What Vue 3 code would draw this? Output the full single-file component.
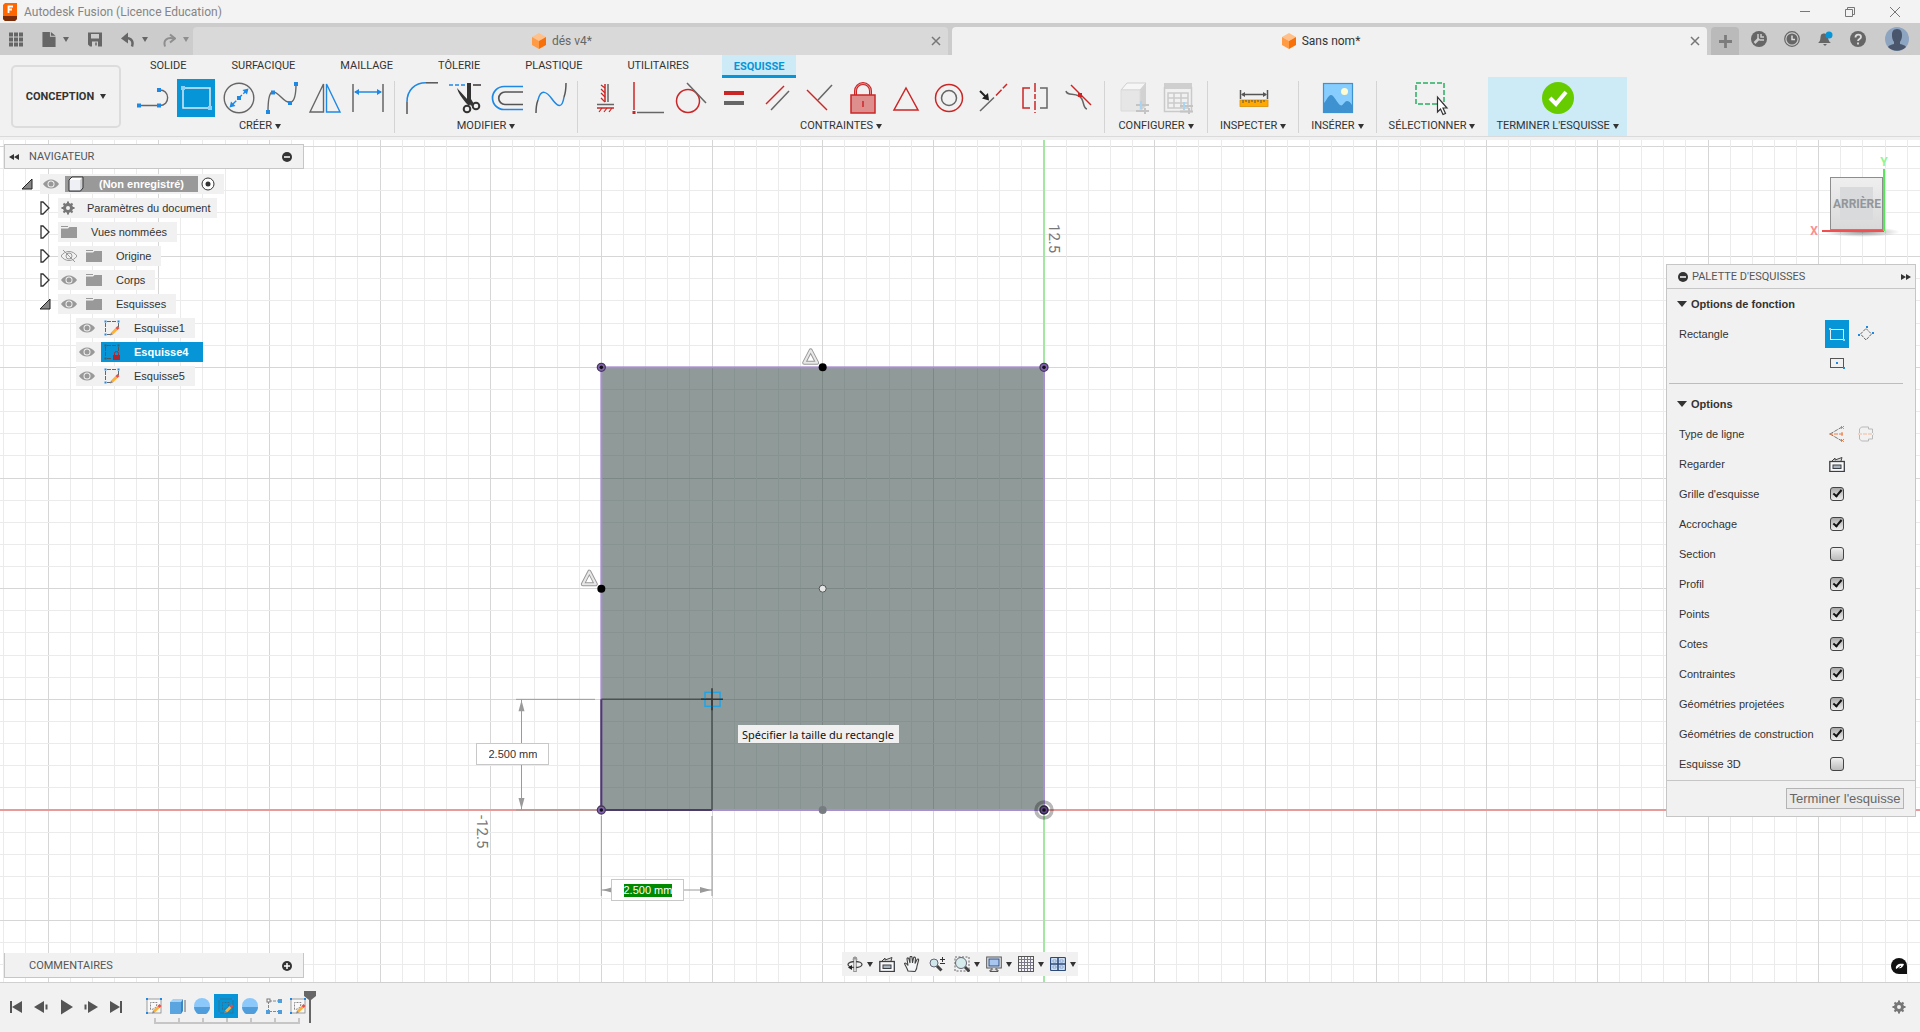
<script setup>
import { ref } from 'vue'

const BLUE = '#1e88e5'
const GREY = '#666'
const RED = '#cb2626'

const square = (x, y, c = BLUE, s = 4) =>
  `<rect x="${x - s / 2}" y="${y - s / 2}" width="${s}" height="${s}" fill="${c}"/>`

const pencil =
  '<path d="M7 12.5L11.5 8l2 2L9 14.5z" fill="#fdb035"/><path d="M11.5 8L13.5 6l2 2-2 2z" fill="#f04a43"/><path d="M7 12.5L9 14.5 6 15.5z" fill="#888"/>'

const icons = {
  line: `<path d="M2 23.5H22M22 8C33 7 34 24 22 23.5" stroke="${GREY}" stroke-width="1.4" fill="none"/>${square(2, 23.5)}${square(22, 23.5)}${square(22, 8)}`,
  rectangle: `<rect x="3" y="6" width="27" height="20" fill="none" stroke="#dceaf2" stroke-width="1.5"/>${square(3, 6, '#8fd0f5')}${square(30, 26, '#8fd0f5')}`,
  circle: `<circle cx="16" cy="16" r="14.8" fill="none" stroke="${GREY}" stroke-width="1.4"/><path d="M9 23L23 9" stroke="${BLUE}" stroke-width="1.4" stroke-dasharray="6 2"/><path d="M6.5 25.5l1.5-6 4.5 4.5zM25.5 6.5l-1.5 6-4.5-4.5z" fill="${BLUE}"/>${square(16, 16)}`,
  spline: `<path d="M2 30C2 4 8 8 15 15S30 26 30 2" fill="none" stroke="${GREY}" stroke-width="1.4"/>${square(2, 30)}${square(7, 10.5)}${square(24, 21)}${square(30, 2)}`,
  mirror: `<path d="M14.5 2V30H1z" fill="none" stroke="${GREY}" stroke-width="1.4"/><path d="M17.5 2V30H31z" fill="none" stroke="${BLUE}" stroke-width="1.4"/>`,
  dimension: `<path d="M1 2V30M31 2V30" stroke="${GREY}" stroke-width="1.5"/><path d="M3 10H29" stroke="${BLUE}" stroke-width="1.5"/><path d="M2 10l5-3v6zM30 10l-5-3v6z" fill="${BLUE}"/>`,
  fillet: `<path d="M1 32V20" stroke="#555" stroke-width="1.5"/><path d="M1 20C1 8 9 .8 20 .8" fill="none" stroke="${BLUE}" stroke-width="1.5"/><path d="M20 .8H32" stroke="#555" stroke-width="1.5"/>`,
  trim: `<path d="M0 3H18" stroke="${BLUE}" stroke-width="1.6" stroke-dasharray="4 2"/><path d="M24 3H32" stroke="#444" stroke-width="1.6"/><path d="M18 1h4v16l3 5-3 2-4-7zM8 6l11 12 3 3-2 3-3-3C13 16 9 11 8 6z" fill="#333"/><circle cx="18" cy="27" r="3.3" fill="none" stroke="#333" stroke-width="2"/><circle cx="27" cy="24" r="3.3" fill="none" stroke="#333" stroke-width="2"/>`,
  offset: `<path d="M31 4.5H12a11.5 11.5 0 0 0 0 23H31" fill="none" stroke="${BLUE}" stroke-width="1.7"/><path d="M31 10H13a6 6 0 0 0 0 12.5H31" fill="none" stroke="#555" stroke-width="1.7"/>`,
  curve: `<path d="M1 31C1 28 1 23 3 18" fill="none" stroke="#555" stroke-width="1.5"/><path d="M3 18C6 6 12 10 17 17S27 28 29 15" fill="none" stroke="${BLUE}" stroke-width="1.5"/><path d="M29 15C30.5 11 31 6 31 1" fill="none" stroke="#555" stroke-width="1.5"/>`,
  ground: `<path d="M16 2V20M8 26H25" stroke="${RED}" stroke-width="1.5"/><path d="M19 2V20M8 22.5H25" stroke="${GREY}" stroke-width="1.5"/><path d="M16 6l-4-3M16 11l-4-4M16 15l-4-4M16 20l-4-4M13 26l-3 4M18 26l-3 4M23 26l-3 4" stroke="${RED}" stroke-width="1.2"/>`,
  coincident: `<path d="M2 0V28" stroke="${RED}" stroke-width="1.5"/><path d="M5 30.5H32" stroke="${GREY}" stroke-width="1.5"/>${square(2, 30.5, RED, 3)}`,
  tangent: `<circle cx="13" cy="19" r="11.5" fill="none" stroke="${RED}" stroke-width="1.5"/><path d="M12 1L31 21" stroke="${GREY}" stroke-width="1.5"/>`,
  equal: `<path d="M6 11H26" stroke="${RED}" stroke-width="4"/><path d="M6 21H26" stroke="${GREY}" stroke-width="4"/>`,
  parallel: `<path d="M5 22L23 4" stroke="${RED}" stroke-width="1.5"/><path d="M10 28L28 9" stroke="${GREY}" stroke-width="1.5"/>`,
  perpendicular: `<path d="M3 8L23 28" stroke="${RED}" stroke-width="1.5"/><path d="M14 18L28 3" stroke="${GREY}" stroke-width="1.5"/>`,
  lock: `<path d="M8.5 14V9a7.5 7.5 0 0 1 15 0V14" fill="none" stroke="${RED}" stroke-width="3"/><path d="M8.5 14V9a7.5 7.5 0 0 1 15 0V14" fill="none" stroke="#e58d8d" stroke-width="1"/><rect x="4" y="13" width="24" height="18" fill="#df8e8e" stroke="${RED}" stroke-width="1.5"/><path d="M16 19v6" stroke="${RED}" stroke-width="1.5"/>`,
  triangle: `<path d="M16 6L28 28H4z" fill="none" stroke="${RED}" stroke-width="1.5"/>`,
  concentric: `<circle cx="16" cy="16" r="13.5" fill="none" stroke="${RED}" stroke-width="1.5"/><circle cx="16" cy="16" r="7.5" fill="none" stroke="${GREY}" stroke-width="1.5"/>`,
  collinear: `<path d="M4 29L18 15.5" stroke="${GREY}" stroke-width="1.5"/><path d="M20 13.5L31 2" stroke="${RED}" stroke-width="1.5" stroke-dasharray="8 2"/><path d="M4 9l6 6" stroke="#222" stroke-width="2"/><path d="M13 18.5l-1-7.5-6 5.5z" fill="#222"/>`,
  symmetry: `<path d="M11 6H4V26H11" fill="none" stroke="${RED}" stroke-width="1.5"/><path d="M21 6H28V26H21" fill="none" stroke="${GREY}" stroke-width="1.5"/><path d="M16 1V31" stroke="${RED}" stroke-width="1.5" stroke-dasharray="9 2 5 2"/>`,
  curvature: `<path d="M4 9c1 5 7 2 13 5s3 12 8 13" fill="none" stroke="${GREY}" stroke-width="1.5"/><path d="M9 3L29 23" stroke="${RED}" stroke-width="1.5"/>${square(18, 13, RED)}`,
  configBox: `<path d="M2 8L8 1H27L21 8z" fill="#f6f6f6" stroke="#cfcfcf"/><path d="M21 8L27 1V24L21 30z" fill="#d2d2d2"/><path d="M2 8H21V29H2z" fill="#e6e6e6" stroke="#dadada"/><path d="M17 23H30M17 29H30" stroke="#c4c4c4" stroke-width="2"/><path d="M22 19v8" stroke="#a9d4f2" stroke-width="2"/><path d="M26 26v6" stroke="#c4c4c4" stroke-width="2"/>`,
  configTable: `<rect x="2" y="1" width="28" height="6" fill="#cfcfcf"/><path d="M2.5 5V29.5H29.5V5M6 11H26V26H6zM12 11V26M19 11V26M6 16H26M6 21H26" fill="none" stroke="#cacaca" stroke-width="1.5"/><path d="M18 24H31M18 29.5H31" stroke="#c4c4c4" stroke-width="2"/><path d="M22 20v8" stroke="#a9d4f2" stroke-width="2"/><path d="M27 26v6" stroke="#c4c4c4" stroke-width="2"/>`,
  measure: `<path d="M2.5 8V17M29.5 8V17M4 12.5H28" stroke="#555" stroke-width="1.5"/><path d="M3 12.5l4-2.500v5zM29 12.5l-4-2.500v5z" fill="#555"/><rect x="2" y="18" width="28" height="6.5" fill="#ffa800" stroke="#d98e00" stroke-width=".8"/><path d="M5 18v3M8 18v2M11 18v3M14 18v2M17 18v3M20 18v2M23 18v3M26 18v2" stroke="#555"/>`,
  image: `<rect x="1.5" y="1.5" width="29" height="29" fill="#87ceff" stroke="#3d92cf" stroke-width="1.2"/><path d="M1 22c3-2 5-9 8-9s6 8 9 10 4-4 7-4 4 3 6 5V31H1z" fill="#3d92cf"/><circle cx="22.5" cy="9.5" r="3.5" fill="#fffbd0"/>`,
  select: `<rect x="-1" y="1" width="28" height="21" fill="none" stroke="#27ae60" stroke-width="1.5" stroke-dasharray="5 2"/><path d="M20.5 15V30L23.5 27 26 32.5 28.500 31.5 26 26H30z" fill="#fff" stroke="#333" stroke-width="1.2"/>`,
  finish: `<circle cx="16" cy="16" r="16" fill="#6c0"/><path d="M8 16l6 6L24 10" fill="none" stroke="#fff" stroke-width="4"/>`
}

const ribbonTabs = ['SOLIDE', 'SURFACIQUE', 'MAILLAGE', 'TÔLERIE', 'PLASTIQUE', 'UTILITAIRES', 'ESQUISSE']
const groups = [
  { label: 'CRÉER', tools: ['line', 'rectangle', 'circle', 'spline', 'mirror', 'dimension'] },
  { label: 'MODIFIER', tools: ['fillet', 'trim', 'offset', 'curve'] },
  {
    label: 'CONTRAINTES',
    tools: ['ground', 'coincident', 'tangent', 'equal', 'parallel', 'perpendicular', 'lock', 'triangle', 'concentric', 'collinear', 'symmetry', 'curvature']
  },
  { label: 'CONFIGURER', tools: ['configBox', 'configTable'], kind: 'mid' },
  { label: 'INSPECTER', tools: ['measure'], kind: 'single' },
  { label: 'INSÉRER', tools: ['image'], kind: 'single' },
  { label: 'SÉLECTIONNER', tools: ['select'], kind: 'single last' },
  { label: "TERMINER L'ESQUISSE", tools: ['finish'], kind: 'finish' }
]

const sketchIcon = `<path d="M3 1.5H13M1.5 3V13M14.500 3V7M3 14.5H7" stroke="#666" stroke-dasharray="4 1" fill="none"/>${square(1.5, 1.5, BLUE, 2)}${square(14.5, 1.5, BLUE, 2)}${square(1.5, 14.5, BLUE, 2)}${pencil}`
const lockedIcon = `<path d="M3 1.5H13M1.5 3V13M14.5 3V8M3 14.5H7" stroke="#555" stroke-dasharray="4 1" fill="none"/>${square(1.5, 1.5, '#555', 2)}${square(14.5, 1.5, '#555', 2)}${square(1.5, 14.5, '#555', 2)}<path d="M10.5 11V9.5a2 2 0 0 1 4 0V11" stroke="#b0272d" fill="none"/><rect x="9" y="11" width="7" height="5" fill="#b0272d"/>`
const folderIcon = '<path d="M0 3V2H7V3zM0 4.5H7L8.5 3H16V14H0z" fill="#999"/>'
const gearIcon =
  '<circle cx="8" cy="8" r="3.5" fill="none" stroke="#777" stroke-width="3"/><path d="M8 1.5v3M8 11.5v3M1.5 8h3M11.5 8h3M3.500 3.500l2 2M10.5 10.5l2 2M3.5 12.5l2-2M10.5 5.5l2-2" stroke="#777" stroke-width="2"/>'
const eyeOn =
  '<path d="M0 8C4 2 12 2 16 8 12 14 4 14 0 8z" fill="#999"/><circle cx="8" cy="8" r="3.5" fill="#f1f1f1"/><circle cx="8" cy="8" r="2.5" fill="#999"/>'
const eyeOff =
  '<path d="M0 8C4 2 12 2 16 8 12 14 4 14 0 8z" fill="none" stroke="#999"/><circle cx="8" cy="8" r="3" fill="none" stroke="#999"/><path d="M2 2L14 14" stroke="#999"/>'

const tree = [
  { name: 'Paramètres du document', level: 1, icon: gearIcon, kind: 'settings-node' },
  { name: 'Vues nommées', level: 1, icon: folderIcon },
  { name: 'Origine', level: 1, icon: folderIcon, eye: eyeOff },
  { name: 'Corps', level: 1, icon: folderIcon, eye: eyeOn },
  { name: 'Esquisses', level: 1, icon: folderIcon, eye: eyeOn, open: true },
  { name: 'Esquisse1', level: 2, icon: sketchIcon, eye: eyeOn },
  { name: 'Esquisse4', level: 2, icon: lockedIcon, eye: eyeOn, kind: 'active' },
  { name: 'Esquisse5', level: 2, icon: sketchIcon, eye: eyeOn }
]

const options = ref([
  { id: 'grid', label: "Grille d'esquisse", on: true },
  { id: 'snap', label: 'Accrochage', on: true },
  { id: 'slice', label: 'Section', on: false },
  { id: 'profile', label: 'Profil', on: true },
  { id: 'points', label: 'Points', on: true },
  { id: 'dims', label: 'Cotes', on: true },
  { id: 'constraints', label: 'Contraintes', on: true },
  { id: 'projected', label: 'Géométries projetées', on: true },
  { id: 'construction', label: 'Géométries de construction', on: true },
  { id: 'sketch3d', label: 'Esquisse 3D', on: false }
])

const lookIcon =
  '<path d="M2.5 5.5L6 2 6 4 13 1.5 12 5" fill="#ddd" stroke="#444"/><rect x=".8" y="5.5" width="14.5" height="10" fill="#fafafa" stroke="#3a3f46" stroke-width="1.3"/><rect x="4" y="9" width="8" height="3.5" fill="#aab4be" stroke="#3a3f46"/>'
const viewTools = [
  { name: 'Orbite', caret: true, svg: '<ellipse cx="8" cy="8.5" rx="7" ry="3" fill="none" stroke="#444" stroke-width="1.3"/><path d="M8 1V16" stroke="#555" stroke-width="3"/><path d="M8 3V15.500" stroke="#fff" stroke-width="1.5"/><path d="M8 0l3 3.500H5z" fill="#999"/><path d="M1 11.500l4-2.500v5z" fill="#222"/>' },
  { name: 'Regarder', svg: lookIcon },
  { name: 'Panoramique', svg: '<path d="M4 15C3 12 1 9 .5 7.5c1-1 2 0 3.5 2L3 3c0-1.500 1.500-1.500 2 0l1 4V1.500c0-1.500 2-1.500 2 0L8.500 7l1-5c.5-1.500 2-1 2 .5L11 7.5l2-4c.7-1 2-.5 1.500 1L13 10c0 3-1 4-2 5.500z" fill="#f4f6f7" stroke="#444" stroke-width="1.1"/>' },
  { name: 'Zoom', svg: '<circle cx="5" cy="7" r="4" fill="#cfe6ea" stroke="#667"/><path d="M8 10l4.5 4.5" stroke="#444" stroke-width="3"/><path d="M11 3.5h5M13.5 1v5M11 7.5h5" stroke="#333"/>' },
  { name: 'Ajuster', caret: true, svg: '<rect x="1" y="1" width="14" height="14" fill="none" stroke="#666" stroke-dasharray="2 1.5"/><circle cx="7" cy="7" r="5.5" fill="#d6ecec" stroke="#667"/><path d="M11 11l4.5 4.5" stroke="#444" stroke-width="3"/>' },
  { name: 'Affichage', caret: true, svg: '<rect x=".7" y="1" width="14.6" height="11" fill="#e8e8e8" stroke="#555"/><rect x="3" y="3" width="10" height="7" fill="#a9c6ee" stroke="#2d4f86"/><path d="M6 12v2H4v1.5h8V14h-2v-2" fill="#ddd" stroke="#555"/>' },
  { name: 'Grille', caret: true, svg: '<rect x=".5" y=".5" width="15" height="15" fill="#f4f4f4" stroke="#555"/><path d="M3.5 1v14M6.5 1v14M9.5 1v14M12.5 1v14M1 3.5h14M1 6.5h14M1 9.5h14M1 12.5h14" stroke="#778"/>' },
  { name: 'Fenêtres', caret: true, svg: '<rect x=".5" y="1.5" width="15" height="13" rx="1" fill="#cfdff3" stroke="#2e4a78" stroke-width="1.2"/><path d="M8 1.5v13M.5 8h15" stroke="#2e4a78" stroke-width="1.6"/><path d="M3 4h3v2H3zM10 4h3v2h-3zM3 10h3v2H3zM10 10h3v2h-3z" fill="#fff" stroke="#6f93c8" stroke-width=".8"/>' }
]

const playback = [
  { name: 'Début', svg: '<path d="M3 2V14" stroke="#555" stroke-width="2"/><path d="M14 2V14L4 8z" fill="#555"/>' },
  { name: 'Pas arrière', svg: '<path d="M11 2V14L1 8z" fill="#555"/><path d="M13.5 5.5v5" stroke="#555" stroke-width="2"/>' },
  { name: 'Lecture', svg: '<path d="M3 .5V15.5L15 8z" fill="#555"/>' },
  { name: 'Pas avant', svg: '<path d="M5 2V14L15 8z" fill="#555"/><path d="M2.5 5.5v5" stroke="#555" stroke-width="2"/>' },
  { name: 'Fin', svg: '<path d="M13 2V14" stroke="#555" stroke-width="2"/><path d="M2 2V14L12 8z" fill="#555"/>' }
]

const sketchFeature = (c, f) =>
  `<rect x="1" y="1" width="14" height="14" fill="${f}" stroke="${c}" stroke-width=".8"/><path d="M4.5 11.5V4.5H11c0 4-2 7-6.5 7z" fill="none" stroke="${c}" stroke-dasharray="2 1"/>${square(1, 1, BLUE, 2)}${square(15, 1, BLUE, 2)}${square(1, 15, BLUE, 2)}${pencil}`
const sphere = '<circle cx="8" cy="8" r="8" fill="#8cc8fa"/><path d="M0 9h16a8 8 0 0 1-16 0z" fill="#4f9ddb"/>'
const features = [
  { name: 'Esquisse 1', svg: sketchFeature('#888', '#f8f8f8') },
  { name: 'Extrusion', svg: '<path d="M0 4l3-3h10L11 4z" fill="#a5d3f7"/><rect y="4" width="11" height="12" fill="#5aa5e0"/><path d="M11 4l2-3v12l-2 3z" fill="#3c85bf"/><path d="M15 2v12" stroke="#666"/>' },
  { name: 'Sphère 1', svg: sphere },
  { name: 'Esquisse 4', svg: sketchFeature('#33708f', 'none'), active: true },
  { name: 'Sphère 2', svg: sphere },
  { name: 'Réseau', svg: '<path d="M3 3H13M2.5 3V13M3 13.5H13" stroke="#888" stroke-dasharray="3 1" fill="none"/><rect x="1" y="1" width="3" height="3" fill="#fff" stroke="#777"/><rect x="12" y="1" width="4" height="4" fill="#4f9ddb"/><rect x="0" y="12" width="4" height="4" fill="#4f9ddb"/><rect x="12" y="12" width="4" height="4" fill="#4f9ddb"/>' },
  { name: 'Esquisse 5', svg: sketchFeature('#888', '#f8f8f8') }
]

/* Canvas geometry: origin of the sketch and one grid step of 0.5 mm */
const OX = 1044
const OY = 670
const STEP = 332 / 15
const steps = Array.from({ length: 161 }, (_, i) => i - 80)
const left = OX - 20 * STEP
const top = OY - 20 * STEP
const midX = OX - 10 * STEP
const midY = OY - 10 * STEP
const toolX = left + 5 * STEP
const toolY = OY - 5 * STEP
const inner = Array.from({ length: 19 }, (_, i) => i + 1)

const height = ref('2.500 mm')
const width = ref('2.500 mm')
</script>

<template>
  <div class="app">
    <header class="titlebar">
      <svg class="logo" viewBox="0 0 14 18">
        <path d="M2 0H14V16L12 18H2L0 16V2z" fill="#f60" />
        <path d="M0 13H14V16L12 18H2L0 16z" fill="#7a2c08" />
        <path d="M5.500 10V3.500H10M5.500 6.500H9" stroke="#fff" stroke-width="1.800" fill="none" />
      </svg>
      <span class="title">Autodesk Fusion (Licence Education)</span>
      <div class="window-controls">
        <button aria-label="Réduire"><svg viewBox="0 0 12 12"><path d="M1 5.500H11" stroke="#777" /></svg></button>
        <button aria-label="Restaurer"><svg viewBox="0 0 12 12"><path d="M1.500 3.500h7v7h-7zM3.500 3.500v-2h7v7h-2" fill="none" stroke="#777" /></svg></button>
        <button aria-label="Fermer"><svg viewBox="0 0 12 12"><path d="M1 1L11 11M11 1L1 11" stroke="#777" /></svg></button>
      </div>
    </header>

    <nav class="tabbar">
      <div class="quick">
        <button aria-label="Données"><svg viewBox="0 0 14 14"><path d="M0 0h4v4H0zM5 0h4v4H5zM10 0h4v4h-4zM0 5h4v4H0zM5 5h4v4H5zM10 5h4v4h-4zM0 10h4v4H0zM5 10h4v4H5zM10 10h4v4h-4z" fill="#666" /></svg></button>
        <button aria-label="Fichier"><svg viewBox="0 0 14 16"><path d="M0 0H8V5H14V16H0zM9 0L14 4H9z" fill="#666" /></svg><i class="caret"></i></button>
        <button aria-label="Enregistrer"><svg viewBox="0 0 14 14"><path d="M0 0H14V14H2L0 12zM3 1.500V6H11V1.500zM4 9V14H10V9z" fill="#666" fill-rule="evenodd" /><path d="M8 10v3" stroke="#666" stroke-width="1.500" /></svg></button>
        <button aria-label="Annuler"><svg viewBox="0 0 14 14"><path d="M2 6C9 4 13 8 11 14" fill="none" stroke="#666" stroke-width="2.500" /><path d="M0 6L7 0V11z" fill="#666" /></svg><i class="caret"></i></button>
        <button aria-label="Rétablir" class="dim"><svg viewBox="0 0 14 14"><path d="M12 6C5 4 1 8 3 14" fill="none" stroke="#666" stroke-width="2" /><path d="M8 2l5 4-5 4" fill="none" stroke="#666" stroke-width="2" /></svg><i class="caret"></i></button>
      </div>
      <div class="doc-tab inactive">
        <button class="doc-name">
          <svg viewBox="0 0 14 16"><path d="M7 0L14 4 7 8 0 4z" fill="#ffc08a" /><path d="M0 4L7 8V16L0 12z" fill="#ff9a45" /><path d="M14 4L7 8V16L14 12z" fill="#f7700a" /></svg>
          dés v4*
        </button>
        <button class="doc-close" aria-label="Fermer dés v4"><svg viewBox="0 0 10 10"><path d="M1 1L9 9M9 1L1 9" stroke="#777" stroke-width="1.500" /></svg></button>
      </div>
      <div class="doc-tab">
        <button class="doc-name">
          <svg viewBox="0 0 14 16"><path d="M7 0L14 4 7 8 0 4z" fill="#ffc08a" /><path d="M0 4L7 8V16L0 12z" fill="#ff9a45" /><path d="M14 4L7 8V16L14 12z" fill="#f7700a" /></svg>
          Sans nom*
        </button>
        <button class="doc-close" aria-label="Fermer Sans nom"><svg viewBox="0 0 10 10"><path d="M1 1L9 9M9 1L1 9" stroke="#777" stroke-width="1.500" /></svg></button>
      </div>
      <button class="add" aria-label="Nouveau"><svg viewBox="0 0 14 14"><path d="M7 0V14M0 7H14" stroke="#7c7c7c" stroke-width="3" /></svg></button>
      <div class="status">
        <button aria-label="Extensions"><svg viewBox="0 0 16 16"><circle cx="8" cy="8" r="8" fill="#666" /><path d="M3.500 12L8 7.500" stroke="#ccc" stroke-width="2.500" /><path d="M7 3v3a2.500 2.500 0 0 0 3 3h3M10 3v3h3" fill="none" stroke="#ccc" stroke-width="1.500" /></svg></button>
        <button aria-label="Historique"><svg viewBox="0 0 16 16"><circle cx="8" cy="8" r="7.300" fill="none" stroke="#666" stroke-width="1.200" /><circle cx="8" cy="8" r="5.500" fill="#666" /><path d="M8 4.500V8.500H11" fill="none" stroke="#ddd" stroke-width="1.500" /></svg></button>
        <button aria-label="Notifications"><svg viewBox="0 0 16 16"><path d="M1 12C4 10 3 7 4 4c1-2 5-2 6 0s1 6 4 8zM6 13h4l-2 2z" fill="#666" /><circle cx="12" cy="4" r="3.500" fill="#0696d7" /></svg></button>
        <button aria-label="Aide"><svg viewBox="0 0 16 16"><circle cx="8" cy="8" r="8" fill="#666" /><path d="M5.500 6.500c0-4 5.500-3.500 5.500-.500 0 2-3 2-3 4M8 11.500v2" fill="none" stroke="#ddd" stroke-width="1.800" /></svg></button>
        <button aria-label="Profil" class="avatar"><svg viewBox="0 0 24 24"><circle cx="12" cy="12" r="12" fill="#8ea5c2" /><path d="M12 2c4 0 5 3 5 6 0 4-1 5-2 7v2c3 1 5 1 6 3-5 5-13 5-18 0 1-2 3-2 6-3v-2C8 13 7 12 7 8c0-3 1-6 5-6z" fill="#49566c" /></svg></button>
      </div>
    </nav>

    <section class="ribbon">
      <button class="workspace">CONCEPTION <i class="caret"></i></button>
      <div class="ribbon-main">
        <div class="ribbon-tabs">
          <button v-for="t in ribbonTabs" :key="t" :class="{ active: t === 'ESQUISSE' }">{{ t }}</button>
        </div>
        <div class="groups">
          <div v-for="g in groups" :key="g.label" class="group" :class="g.kind">
            <div class="tools">
              <button v-for="t in g.tools" :key="t" :aria-label="t" :class="{ active: t === 'rectangle' }">
                <svg viewBox="0 0 32 32" v-html="icons[t]"></svg>
              </button>
            </div>
            <button class="group-label">{{ g.label }}<i class="caret"></i></button>
          </div>
        </div>
      </div>
    </section>

    <main class="canvas">
      <svg class="scene">
        <g shape-rendering="crispEdges">
          <template v-for="n in steps" :key="n">
            <line :x1="OX + n * STEP" y1="0" :x2="OX + n * STEP" y2="100%" :stroke="n % 5 ? '#ebebeb' : '#d6d6d6'" />
            <line x1="0" :y1="OY + n * STEP" x2="100%" :y2="OY + n * STEP" :stroke="n % 5 ? '#ebebeb' : '#d6d6d6'" />
          </template>
        </g>
        <line :x1="OX" y1="0" :x2="OX" y2="100%" stroke="#a2e8a2" stroke-width="2" />
        <line x1="0" :y1="OY" x2="100%" :y2="OY" stroke="#e89a9a" stroke-width="2" />
        <rect :x="left" :y="top" :width="20 * STEP" :height="20 * STEP" fill="#909a98" />
        <g shape-rendering="crispEdges">
          <template v-for="n in inner" :key="n">
            <line :x1="left + n * STEP" :y1="top" :x2="left + n * STEP" :y2="OY" :stroke="n % 5 ? '#879391' : '#7c8886'" />
            <line :x1="left" :y1="top + n * STEP" :x2="OX" :y2="top + n * STEP" :stroke="n % 5 ? '#879391' : '#7c8886'" />
          </template>
        </g>
        <rect :x="left" :y="top" :width="20 * STEP" :height="20 * STEP" fill="none" stroke="#a78fd0" stroke-width="2" />
        <path :d="`M${left} ${toolY}V${OY}H${toolX}`" fill="none" stroke="#4b3b66" stroke-width="2" />
        <path :d="`M${left} ${toolY}H${toolX}V${OY}`" fill="none" stroke="#4a5150" stroke-width="1.500" />

        <g stroke="#9a9a9a" fill="none">
          <path :d="`M516 ${toolY}H595M516 ${OY}H${left}M521.500 ${toolY}V${OY}`" />
          <path :d="`M${left} ${OY + 6}V756M${toolX} ${OY + 6}V756M${left} 750H${toolX}`" />
        </g>
        <g fill="#9a9a9a">
          <path :d="`M521.500 ${toolY + 1}l3 11h-6zM521.500 ${OY - 1}l3-11h-6z`" />
          <path :d="`M${left + 1} 750l11-3v6zM${toolX - 1} 750l-11-3v6z`" />
        </g>

        <g v-for="[x, y] in [[left, top], [OX, top], [left, OY]]" :key="`${x}-${y}`">
          <circle :cx="x" :cy="y" r="4" fill="#8562b8" stroke="#453b55" stroke-width="1.300" />
          <circle :cx="x" :cy="y" r="1.800" fill="#111" />
        </g>
        <circle :cx="OX" :cy="OY" r="8" fill="none" stroke="#000" stroke-opacity=".28" stroke-width="3.500" />
        <circle :cx="OX" :cy="OY" r="4" fill="#5f4588" stroke="#2b2438" stroke-width="1.500" />
        <circle :cx="OX" :cy="OY" r="1.800" fill="#111" />
        <circle :cx="midX" :cy="top" r="4" fill="#000" />
        <circle :cx="left" :cy="midY" r="4" fill="#000" />
        <circle :cx="midX" :cy="midY" r="3.500" fill="#e8e8e8" stroke="#555" />
        <circle :cx="midX" :cy="OY" r="4" fill="#777c80" />

        <g v-for="[x, y] in [[midX - 12, top - 11], [left - 12, midY - 11]]" :key="x" fill="none">
          <path :d="`M${x} ${y - 6}l6.500 12.500h-13z`" stroke="#999" stroke-width="4" stroke-linejoin="round" />
          <path :d="`M${x} ${y - 6}l6.500 12.500h-13z`" stroke="#e8e8e8" stroke-width="2" stroke-linejoin="round" />
        </g>

        <rect :x="toolX - 7" :y="toolY - 7" width="15" height="14" fill="none" stroke="#1fa4e6" stroke-width="1.500" />
        <path :d="`M${toolX - 11} ${toolY}h22M${toolX} ${toolY - 11}v22`" stroke="#333" stroke-width="1.500" />

        <text class="axis-label" transform="translate(1049 84) rotate(90)">12.5</text>
        <text class="axis-label" transform="translate(477 675) rotate(90)">-12.5</text>
      </svg>

      <aside class="browser">
        <div class="panel-head">
          <svg class="rewind" viewBox="0 0 10 8"><path d="M5 1V7L0 4zM10 1V7L5 4z" fill="#333" /></svg>
          <span>NAVIGATEUR</span>
          <button aria-label="Réduire le navigateur"><svg viewBox="0 0 10 10"><circle cx="5" cy="5" r="5" fill="#333" /><path d="M2 5h6" stroke="#fff" stroke-width="1.500" /></svg></button>
        </div>
        <ul class="tree">
          <li class="level0">
            <svg class="toggle" viewBox="0 0 12 12"><path d="M11 1V11H1z" fill="#888" stroke="#222" /></svg>
            <span class="plate root">
              <svg class="ico" viewBox="0 0 16 16" v-html="eyeOn"></svg>
              <span class="root-name">
                <svg class="ico" viewBox="0 0 16 16"><path d="M1 4L4 1H15L12.500 4z" fill="#fff" /><path d="M12.500 4L15 1V12L12.500 15z" fill="#ccc" /><path d="M1 4H12.500V15H1z" fill="#eef0f6" /><path d="M1 4L4 1H15V12L12.500 15H1z" fill="none" stroke="#333" /></svg>
                <b>(Non enregistré)</b>
              </span>
              <svg class="radio" viewBox="0 0 14 14"><circle cx="7" cy="7" r="6" fill="#fff" stroke="#333" /><circle cx="7" cy="7" r="2.500" fill="#333" /></svg>
            </span>
          </li>
          <li v-for="n in tree" :key="n.name" :class="'level' + n.level">
            <svg v-if="n.open" class="toggle" viewBox="0 0 12 12"><path d="M11 1V11H1z" fill="#888" stroke="#222" /></svg>
            <svg v-else-if="n.level === 1" class="toggle" viewBox="0 0 12 14"><path d="M2 1H4L10 7 4 13H2z" fill="#fff" stroke="#333" stroke-width="1.300" /></svg>
            <span class="plate" :class="n.kind">
              <svg v-if="n.eye" class="ico eye" viewBox="0 0 16 16" v-html="n.eye"></svg>
              <span class="node">
                <svg class="ico" viewBox="0 0 16 16" v-html="n.icon"></svg>
                <span>{{ n.name }}</span>
              </span>
            </span>
          </li>
        </ul>
      </aside>

      <div class="cube">
        <svg viewBox="0 -6 90 96">
          <defs>
            <linearGradient id="face" x1="0" y1="0" x2="0" y2="1"><stop offset="0" stop-color="#efefef" /><stop offset="1" stop-color="#d9d9d9" /></linearGradient>
            <radialGradient id="shade"><stop offset="0" stop-color="#000" stop-opacity=".4" /><stop offset="1" stop-color="#000" stop-opacity="0" /></radialGradient>
          </defs>
          <ellipse cx="52" cy="75" rx="38" ry="5" fill="url(#shade)" />
          <rect x="20.500" y="20.500" width="52" height="52" fill="url(#face)" stroke="#8d8d8d" />
          <rect x="30" y="30" width="33" height="33" fill="#d8dadc" />
          <path d="M12 74H74" stroke="#f05050" stroke-width="2" />
          <path d="M74 12V74" stroke="#5ae65a" stroke-width="2" />
          <text class="face" x="47" y="51">ARRIÈRE</text>
          <text class="ax" x="74" y="9" fill="#90f590">Y</text>
          <text class="ax" x="4" y="78" fill="#fb8f8f">X</text>
        </svg>
      </div>

      <aside class="palette">
        <div class="panel-head">
          <button aria-label="Réduire la palette"><svg viewBox="0 0 10 10"><circle cx="5" cy="5" r="5" fill="#333" /><path d="M2 5h6" stroke="#fff" stroke-width="1.500" /></svg></button>
          <span>PALETTE D'ESQUISSES</span>
          <svg class="rewind" viewBox="0 0 10 8"><path d="M0 1V7L5 4zM5 1V7L10 4z" fill="#333" /></svg>
        </div>
        <div class="palette-body">
          <h3><i class="caret big"></i>Options de fonction</h3>
          <div class="row">
            <span>Rectangle</span>
            <div class="pair">
              <button class="active" aria-label="Rectangle 2 points"><svg viewBox="0 0 16 16"><rect x="1.500" y="3.500" width="13" height="10" fill="none" stroke="#e4eef4" /><rect y="2" width="2" height="2" fill="#9fd6f5" /><rect x="14" y="13" width="2" height="2" fill="#9fd6f5" /></svg></button>
              <button aria-label="Rectangle 3 points"><svg viewBox="0 0 16 16"><path d="M8 2.500L13.500 8 8 14 2.500 8z" fill="none" stroke="#666" stroke-dasharray="3 1" /><path d="M8 0h2v2H8zM14 6h2v2h-2zM0 8h2v2H0z" fill="#1e88e5" /></svg></button>
            </div>
          </div>
          <div class="row">
            <span></span>
            <div class="pair">
              <button aria-label="Rectangle par centre"><svg viewBox="0 0 16 16"><rect x="1.500" y="2.500" width="13" height="9" fill="none" stroke="#555" /><path d="M7 6h2v2H7zM14 11h2v2h-2z" fill="#1e88e5" /></svg></button>
            </div>
          </div>
          <hr />
          <h3><i class="caret big"></i>Options</h3>
          <div class="row">
            <span>Type de ligne</span>
            <div class="pair">
              <button aria-label="Construction"><svg viewBox="0 0 16 16"><path d="M1 8L13 1M1 8L13 15" stroke="#777" stroke-dasharray="4 1" /><path d="M0 8H15M12 0l3 3M15 0l-3 3M13 6v4M12 13l3 3M15 13l-3 3" stroke="#f07a3c" stroke-dasharray="4 1" /></svg></button>
              <button aria-label="Axe"><svg viewBox="0 0 16 16"><path d="M1.500 7V3l2-2h7v2h4v4M1.500 9v4l2 2h7v-2h4V9" fill="none" stroke="#b9b9b9" /><path d="M0 8H16" stroke="#f5b999" stroke-dasharray="4 1" /></svg></button>
            </div>
          </div>
          <div class="row">
            <span>Regarder</span>
            <div class="pair"><button aria-label="Regarder"><svg viewBox="0 0 16 16" v-html="lookIcon"></svg></button></div>
          </div>
          <label v-for="o in options" :key="o.id" class="row" :for="o.id">
            <span>{{ o.label }}</span>
            <span class="pair"><input :id="o.id" v-model="o.on" type="checkbox" /></span>
          </label>
        </div>
        <footer><button>Terminer l'esquisse</button></footer>
      </aside>

      <div class="dim-box vertical"><input v-model="height" aria-label="Hauteur" /></div>
      <div class="dim-box horizontal"><input v-model="width" class="selected" aria-label="Largeur" /></div>
      <div class="tooltip">Spécifier la taille du rectangle</div>

      <div class="panel-head comments">
        <span>COMMENTAIRES</span>
        <button aria-label="Ouvrir les commentaires"><svg viewBox="0 0 10 10"><circle cx="5" cy="5" r="5" fill="#333" /><path d="M2 5h6M5 2v6" stroke="#fff" stroke-width="1.500" /></svg></button>
      </div>

      <div class="viewbar">
        <button v-for="v in viewTools" :key="v.name" :aria-label="v.name">
          <svg viewBox="0 0 16 16" v-html="v.svg"></svg><i v-if="v.caret" class="caret"></i>
        </button>
      </div>

      <button class="assistant" aria-label="Assistant">
        <svg viewBox="0 0 18 18"><path d="M9 1a8 8 0 0 1 8 8v8H9A8 8 0 0 1 9 1z" fill="#111" /><path d="M6 12c-1-4 3-6 8-5-1 3-3 5-6 4z" fill="#fff" /><path d="M7.500 11.500L11 9" stroke="#111" /></svg>
      </button>
    </main>

    <footer class="timeline">
      <div class="playback">
        <button v-for="p in playback" :key="p.name" :aria-label="p.name"><svg viewBox="0 0 16 16" v-html="p.svg"></svg></button>
      </div>
      <div class="features">
        <button v-for="f in features" :key="f.name" :aria-label="f.name" :class="{ active: f.active }">
          <svg viewBox="0 0 16 16" v-html="f.svg"></svg>
        </button>
      </div>
      <svg class="marker" viewBox="0 0 12 32"><path d="M0 0H12V5L7 9V32H5V9L0 5z" fill="#666" /></svg>
      <button class="settings" aria-label="Paramètres"><svg viewBox="0 0 16 16" v-html="gearIcon"></svg></button>
    </footer>
  </div>
</template>

<style>
body {
  margin: 0;
}
</style>

<style scoped>
.app {
  display: flex;
  flex-direction: column;
  min-height: 100vh;
  background: #f1f1f1;
  color: #333;
  font: 11px/16px "Liberation Sans", Arial, sans-serif;
}
button {
  display: flex;
  align-items: center;
  justify-content: center;
  padding: 0;
  border: 0;
  background: none;
  color: inherit;
  font: inherit;
}
svg {
  display: block;
  flex: none;
}
.caret {
  flex: none;
  border: 3px solid transparent;
  border-top: 5px solid #333;
  border-bottom: 0;
}
.caret.big {
  border-width: 6px 5px 0;
}

.titlebar {
  display: flex;
  align-items: center;
  height: 23px;
  padding: 0 19px 0 3px;
  background: #f3f3f3;
  color: #858585;
  font: 12px/16px Roboto, sans-serif;
}
.logo {
  width: 14px;
  height: 18px;
  margin-right: 7px;
}
.window-controls {
  display: flex;
  gap: 33px;
  margin-left: auto;
}
.window-controls svg {
  width: 12px;
  height: 12px;
}

.tabbar {
  display: flex;
  align-items: flex-end;
  height: 32px;
  background: #ccc;
}
.quick {
  display: flex;
  align-items: center;
  box-sizing: border-box;
  width: 193px;
  height: 32px;
  padding-left: 9px;
  gap: 19px;
}
.quick button {
  gap: 7px;
}
.quick button .caret {
  border-top-color: #666;
}
.quick svg {
  width: 14px;
  height: 15px;
}
.quick .dim {
  margin-left: -5px;
  opacity: .6;
}
.doc-tab {
  display: flex;
  flex: 1;
  align-items: center;
  height: 28px;
  margin-right: 4px;
  padding-right: 7px;
  border-radius: 4px 4px 0 0;
  background: #f1f1f1;
  font: 12px/16px Roboto, sans-serif;
}
.doc-tab.inactive {
  background: #d9d9d9;
  color: #666;
}
.doc-name {
  flex: 1;
  gap: 6px;
}
.doc-name svg {
  width: 14px;
  height: 16px;
}
.doc-close svg {
  width: 10px;
  height: 10px;
}
.add {
  width: 28px;
  height: 28px;
  border-radius: 4px 4px 0 0;
  background: #bababa;
}
.add svg {
  width: 13px;
  height: 13px;
}
.status {
  display: flex;
  align-items: center;
  height: 32px;
  margin: 0 11px 0 12px;
  gap: 17px;
}
.status svg {
  width: 16px;
  height: 16px;
}
.status .avatar {
  margin-left: 2px;
}
.status .avatar svg {
  width: 24px;
  height: 24px;
}

.ribbon {
  display: flex;
  height: 81px;
  margin-bottom: 3px;
  border-bottom: 1px solid #dadada;
  font: 11px/16px Roboto, sans-serif;
}
.workspace {
  box-sizing: border-box;
  width: 110px;
  height: 63px;
  margin: 10px 5px 0 11px;
  gap: 6px;
  border: 2px solid #dcdcdc;
  border-radius: 5px;
  font-weight: bold;
}
.ribbon-tabs {
  display: flex;
  height: 22px;
  padding-left: 12px;
  gap: 21px;
}
.ribbon-tabs button {
  padding: 0 12px;
  white-space: nowrap;
}
.ribbon-tabs .active {
  box-sizing: border-box;
  height: 23px;
  border-top: 3px solid #cdeaf7;
  border-bottom: 3px solid #0696d7;
  background: #cdeaf7;
  color: #0696d7;
  font-weight: bold;
}
.groups {
  display: flex;
}
.group {
  display: flex;
  position: relative;
  flex-direction: column;
  align-items: center;
  height: 57px;
  padding: 2px 5px 0;
  margin-right: 1px;
}
.group::after {
  position: absolute;
  top: 4px;
  right: -1px;
  width: 1px;
  height: 52px;
  background: #d4d4d4;
  content: "";
}
.group.last::after,
.group.finish::after {
  display: none;
}
.group.mid {
  padding: 2px 8px 0;
}
.group.single {
  padding: 2px 12px 0;
}
.group.finish {
  padding: 2px 8px 0;
  background: #cdeaf7;
}
.tools {
  display: flex;
}
.tools button {
  width: 38px;
  height: 38px;
  margin: 0 2px 0 3px;
}
.tools .active {
  background: #0696d7;
}
.tools svg {
  overflow: visible;
  width: 32px;
  height: 32px;
}
.group-label {
  margin-top: 1px;
  gap: 3px;
  white-space: nowrap;
}

.canvas {
  position: relative;
  flex: 1;
  overflow: hidden;
  min-height: 700px;
  background: #fff;
}
.scene {
  position: absolute;
  inset: 0;
  width: 100%;
  height: 100%;
}
.axis-label {
  fill: #777;
  font: 15px Roboto, sans-serif;
}

.panel-head {
  display: flex;
  align-items: center;
  box-sizing: border-box;
  height: 25px;
  border: 1px solid #c6c6c6;
  background: #f1f1f1;
  color: #555;
  font: 11px/16px Roboto, sans-serif;
}
.panel-head button svg {
  width: 10px;
  height: 10px;
}
.rewind {
  width: 10px;
  height: 8px;
}
.browser {
  position: absolute;
  top: 4px;
  left: 4px;
  width: 300px;
}
.browser .panel-head {
  padding: 0 11px 0 4px;
  gap: 10px;
}
.browser .panel-head button,
.comments button {
  margin-left: auto;
}
.tree {
  margin: 3px 0 0;
  padding: 0;
  list-style: none;
}
.tree li {
  display: flex;
  align-items: center;
  height: 24px;
}
.toggle {
  width: 12px;
  height: 14px;
  margin-right: 7px;
}
.level0 {
  padding-left: 17px;
}
.level1 {
  padding-left: 35px;
}
.level2 {
  padding-left: 72px;
}
.plate {
  display: flex;
  align-items: center;
  height: 20px;
  padding-left: 3px;
  background: #f1f1f1;
  white-space: nowrap;
}
.ico {
  width: 16px;
  height: 16px;
}
.root {
  padding-right: 9px;
}
.root-name {
  display: flex;
  align-items: center;
  height: 16px;
  margin: 0 3px 0 6px;
  padding: 0 14px 0 3px;
  gap: 15px;
  background: #999;
  color: #fff;
}
.radio {
  width: 14px;
  height: 14px;
}
.node {
  display: flex;
  align-items: center;
  height: 20px;
  padding-right: 10px;
  gap: 14px;
}
.settings-node {
  padding-left: 2px;
}
.settings-node .node {
  padding-right: 6px;
  gap: 11px;
}
.eye {
  margin-right: 6px;
}
.eye + .node {
  padding-left: 3px;
}
.active .node {
  padding-right: 15px;
  background: #0696d7;
  color: #fff;
  font-weight: bold;
}

.cube {
  position: absolute;
  top: 11px;
  right: 20px;
}
.cube svg {
  width: 90px;
  height: 96px;
}
.face {
  fill: #92969b;
  font: bold 12px Roboto, sans-serif;
  text-anchor: middle;
}
.ax {
  font: bold 12px Roboto, sans-serif;
  text-anchor: middle;
}

.palette {
  position: absolute;
  top: 124px;
  right: 4px;
  box-sizing: border-box;
  width: 250px;
  border: 1px solid #c6c6c6;
  background: #f1f1f1;
}
.palette .panel-head {
  height: 24px;
  padding: 0 4px 0 11px;
  gap: 4px;
  border-width: 0 0 1px;
}
.palette .rewind {
  margin-left: auto;
}
.palette-body {
  padding: 0 12px 1px;
}
h3 {
  display: flex;
  align-items: center;
  height: 30px;
  margin: 0 -2px;
  gap: 4px;
  font-size: 11px;
}
.row {
  display: flex;
  align-items: center;
  justify-content: space-between;
  height: 30px;
}
.pair {
  display: flex;
  align-items: center;
  width: 78px;
  gap: 5px;
}
.pair button {
  width: 24px;
  height: 28px;
}
.pair .active {
  background: #0696d7;
}
.pair svg {
  width: 16px;
  height: 16px;
}
hr {
  height: 1px;
  margin: 4px 0 5px -10px;
  border: 0;
  background: #bdbdbd;
}
input[type="checkbox"] {
  position: relative;
  box-sizing: border-box;
  width: 14px;
  height: 14px;
  margin: 0 5px;
  border: 1px solid #444;
  border-radius: 3px;
  background: linear-gradient(#eee, #bbb);
  appearance: none;
}
input[type="checkbox"]:checked {
  background: linear-gradient(#aaa, #eee);
}
input[type="checkbox"]:checked::after {
  position: absolute;
  top: 0;
  left: 4px;
  width: 3px;
  height: 7px;
  border: solid #111;
  border-width: 0 2px 2px 0;
  transform: rotate(40deg);
  content: "";
}
.palette footer {
  display: flex;
  justify-content: flex-end;
  padding: 7px 11px;
  border-top: 1px solid #c6c6c6;
}
.palette footer button {
  box-sizing: border-box;
  width: 118px;
  height: 21px;
  border: 1px solid #b4b4b4;
  background: #eaeaea;
  color: #666;
  font-size: 13px;
}

.dim-box {
  display: flex;
  position: absolute;
  align-items: center;
  justify-content: center;
  box-sizing: border-box;
  width: 73px;
  height: 22px;
  border: 1px solid #c8c8c8;
  background: #fff;
}
.vertical {
  top: 603px;
  left: 476px;
}
.horizontal {
  top: 739px;
  left: 611px;
}
.dim-box input {
  box-sizing: border-box;
  width: 48px;
  height: 13px;
  padding: 0;
  border: 0;
  outline: 0;
  color: #333;
  font: 11px/13px "Liberation Sans", Arial, sans-serif;
  text-align: center;
}
.dim-box .selected {
  background: #008a00;
  color: #fff;
}
.tooltip {
  position: absolute;
  top: 585px;
  left: 738px;
  box-sizing: border-box;
  height: 18px;
  padding: 1px 5px 0 4px;
  background: #f0f0f0;
  color: #111;
  font: 11px/18px "Noto Sans", sans-serif;
  white-space: nowrap;
}
.comments {
  position: absolute;
  bottom: 4px;
  left: 4px;
  width: 300px;
  padding: 1px 11px 0 24px;
  border-top: 0;
}
.viewbar {
  display: flex;
  position: absolute;
  bottom: 6px;
  left: 50%;
  align-items: center;
  height: 24px;
  padding: 0 5px;
  gap: 9px;
  background: #f1f1f1;
  transform: translateX(-50%);
}
.viewbar button {
  gap: 4px;
}
.viewbar .caret {
  margin-right: -3px;
}
.viewbar svg {
  width: 16px;
  height: 16px;
}
.assistant {
  position: absolute;
  right: 12px;
  bottom: 7px;
}
.assistant svg {
  width: 18px;
  height: 18px;
}

.timeline {
  display: flex;
  align-items: center;
  box-sizing: border-box;
  height: 50px;
  padding: 0 13px 2px 8px;
  border-top: 1px solid #d0d0d0;
}
.playback {
  display: flex;
  gap: 9px;
}
.playback svg,
.settings svg {
  width: 16px;
  height: 16px;
}
.features {
  display: flex;
  align-self: flex-start;
  margin: 11px 0 0 18px;
}
.features button {
  position: relative;
  width: 24px;
  height: 24px;
}
.features button::after {
  position: absolute;
  top: 24px;
  left: 12px;
  box-sizing: border-box;
  width: 24px;
  height: 6px;
  border: solid #c6c6c6;
  border-width: 0 0 2px 2px;
  content: "";
}
.features button:last-child::after {
  width: 2px;
}
.features .active {
  background: #0696d7;
}
.features svg {
  width: 16px;
  height: 16px;
}
.marker {
  width: 12px;
  height: 32px;
  margin-left: -6px;
}
.settings {
  margin-left: auto;
}
</style>
